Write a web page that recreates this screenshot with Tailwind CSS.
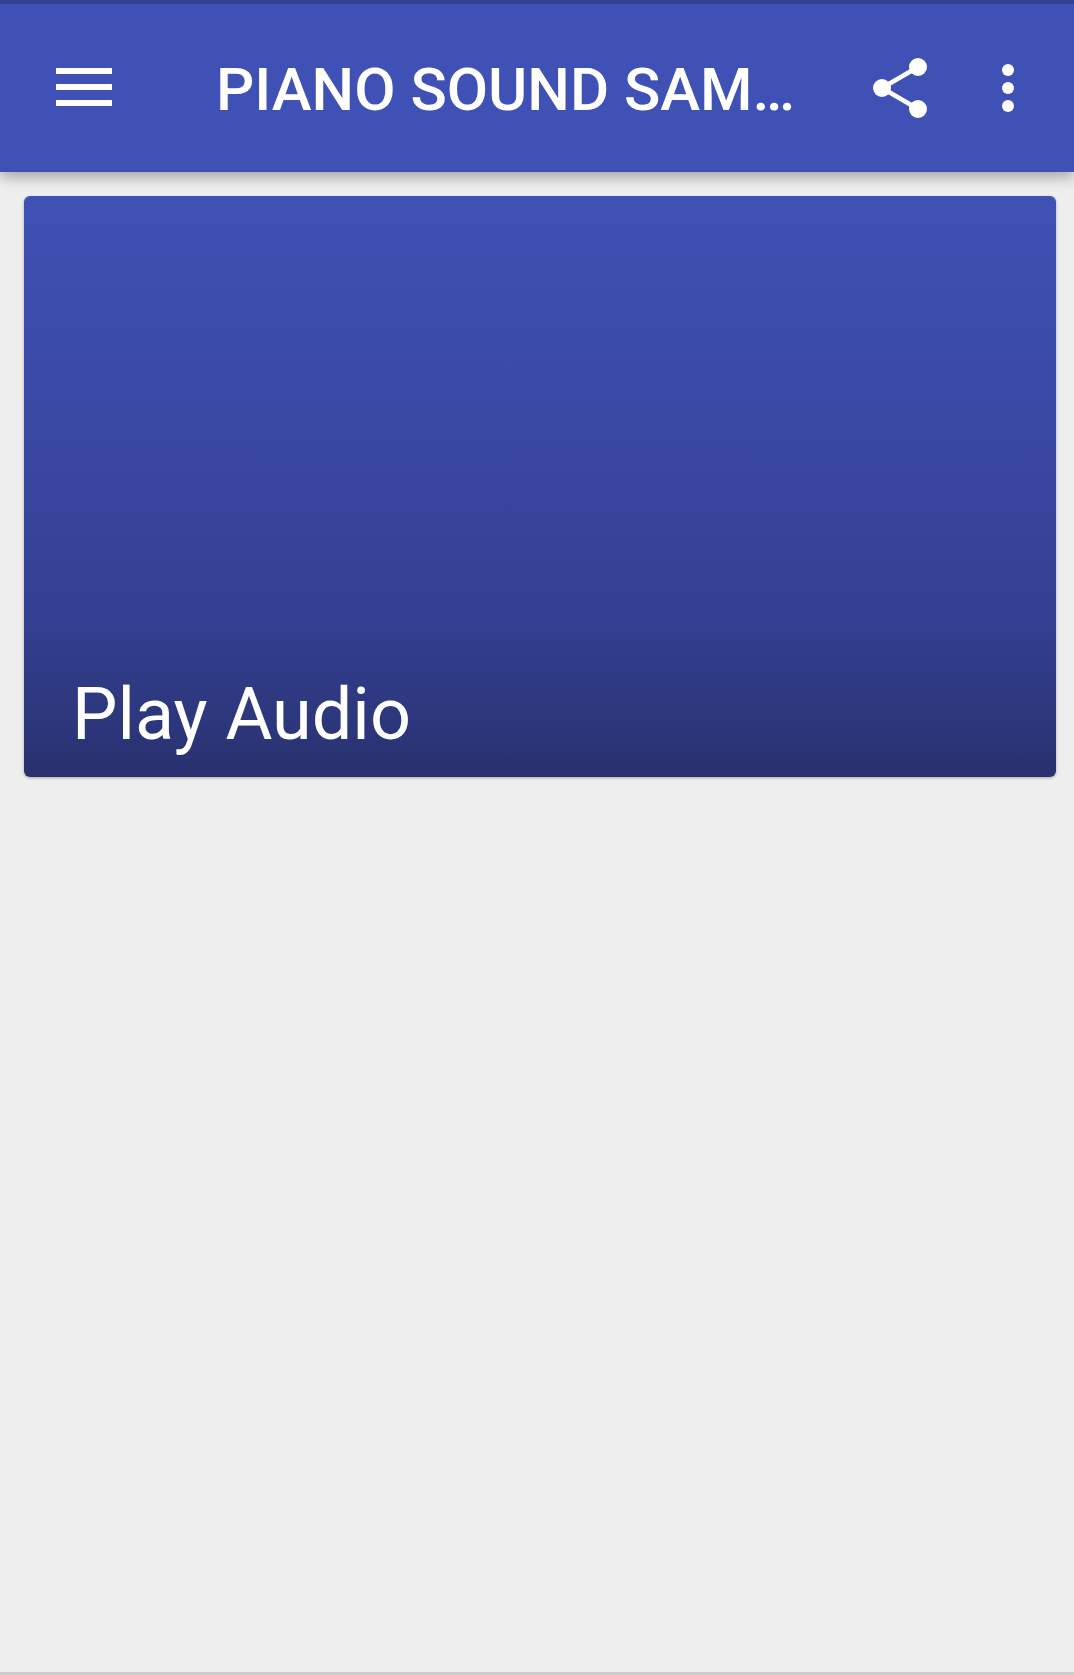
<!DOCTYPE html>
<html>
<head>
<meta charset="utf-8">
<script src="https://cdn.jsdelivr.net/npm/@tailwindcss/browser@4"></script>
</head>
<body class="m-0">
<div class="w-[1074px] h-[1675px] flex flex-col bg-[#eeeeee] overflow-hidden font-['Roboto',sans-serif]">
  <div class="h-[4px] bg-[#334195] shrink-0 relative z-20"></div>
  <header class="h-[168px] shrink-0 bg-[#3f51b5] flex items-center relative z-10 shadow-[0_6px_12px_rgba(0,0,0,0.28)]">
    <div class="w-[168px] h-[168px] pl-[56px] flex items-center shrink-0">
      <div class="w-[56px] flex flex-col gap-[10px] mb-[2px]">
        <div class="h-[6px] bg-white"></div>
        <div class="h-[6px] bg-white"></div>
        <div class="h-[6px] bg-white"></div>
      </div>
    </div>
    <div class="w-[680px] pl-[48px] pt-[4px] text-white text-[60px] leading-[72px] font-medium whitespace-nowrap overflow-hidden">PIANO SOUND SAM…</div>
    <div class="flex items-center ml-[16px] gap-[36px]">
      <svg class="w-[72px] h-[72px]" viewBox="0 0 72 72" fill="white" stroke="white">
        <path d="M18 36 L54 15 M18 36 L54 57" stroke-width="4.5" fill="none"/>
        <circle cx="54" cy="15" r="9" stroke="none"/>
        <circle cx="18" cy="36" r="9" stroke="none"/>
        <circle cx="54" cy="57" r="9" stroke="none"/>
      </svg>
      <svg class="w-[72px] h-[72px]" viewBox="0 0 72 72" fill="white">
        <circle cx="36" cy="18" r="6"/>
        <circle cx="36" cy="36" r="6"/>
        <circle cx="36" cy="54" r="6"/>
      </svg>
    </div>
  </header>
  <main class="flex-1 flex flex-col pl-[24px] pt-[24px]">
    <div class="w-[1032px] h-[581px] rounded-[6px] shadow-[0_1px_3px_rgba(0,0,0,0.3)] bg-[linear-gradient(180deg,#3f51b5_0%,#3c4cab_22%,#38469e_50%,#334092_72%,#2d377c_90%,#28306d_100%)] flex items-end pl-[48px] pb-[20px]">
      <div class="text-white text-[72px] leading-[84px]">Play Audio</div>
    </div>
  </main>
  <div class="h-[3px] bg-[#cccccc] shrink-0"></div>
</div>
</body>
</html>
